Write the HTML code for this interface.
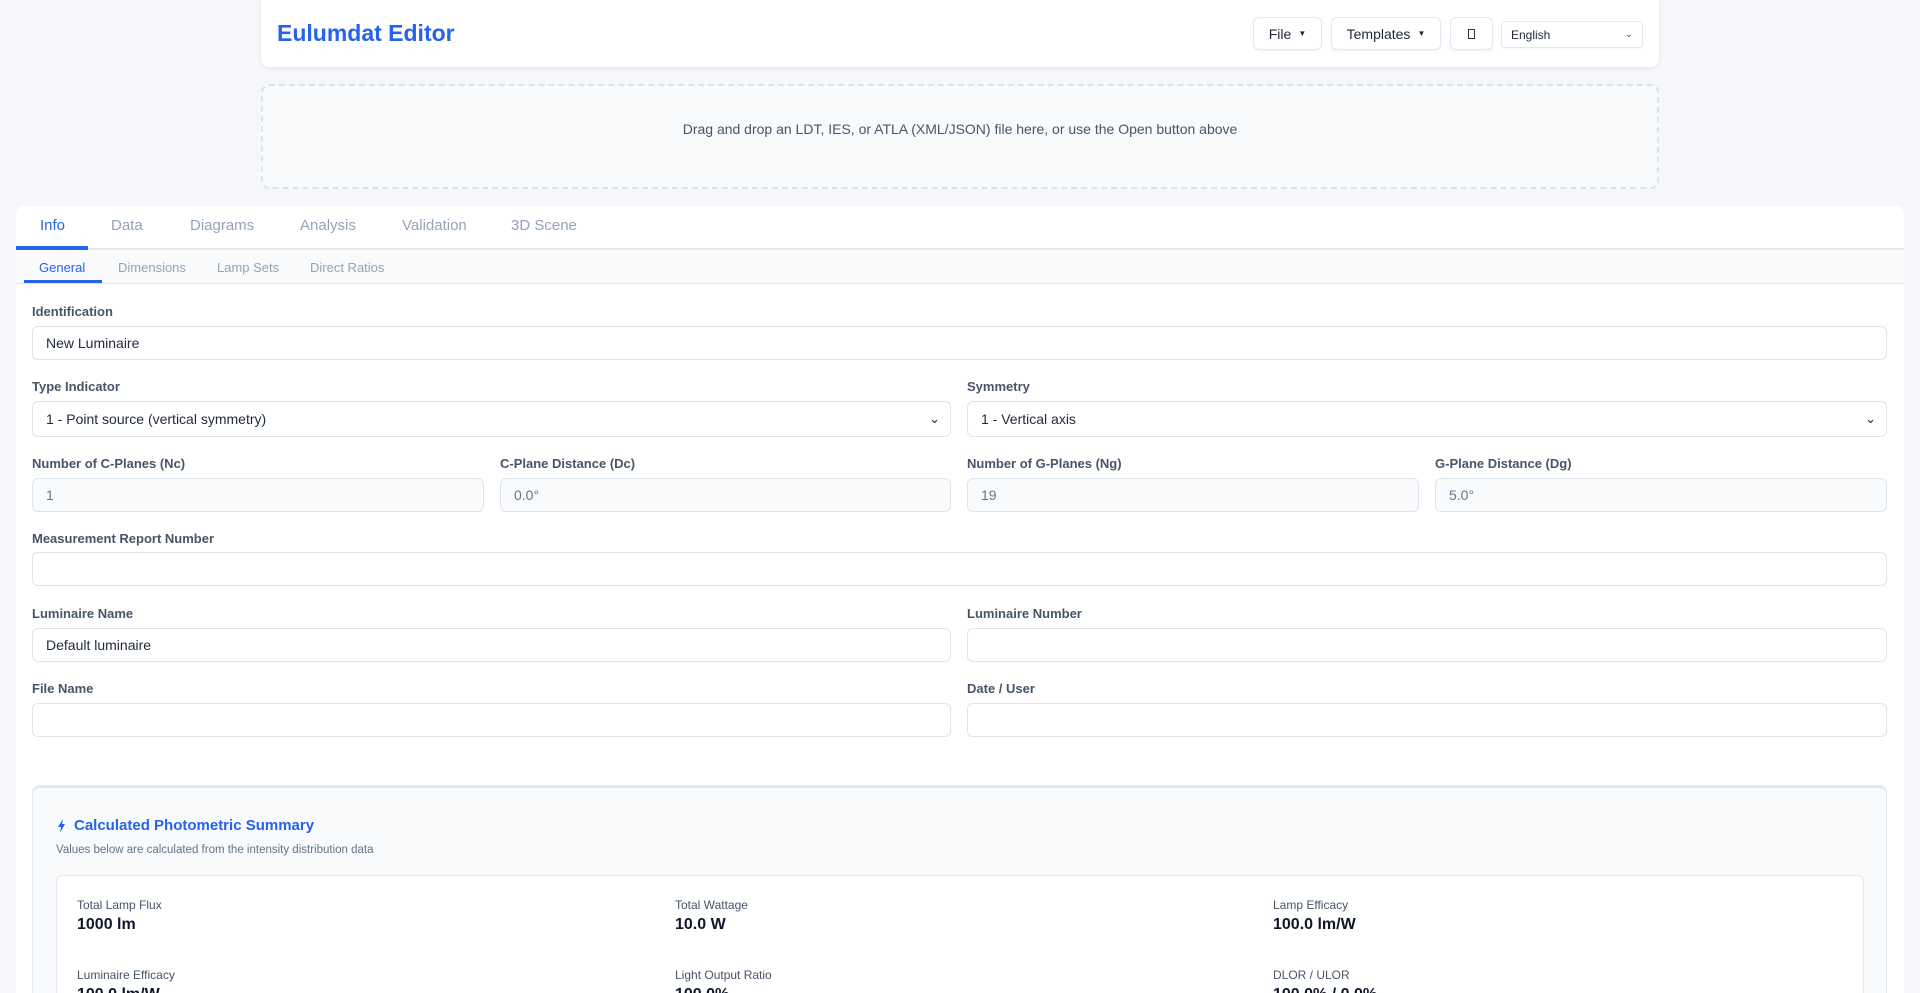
<!DOCTYPE html>
<html style="overflow:hidden;height:993px"><head><meta charset="utf-8"><style>
*{box-sizing:border-box;margin:0;padding:0}
body{width:1920px;height:993px;overflow:hidden;background:#f5f7fa;font-family:"Liberation Sans",sans-serif;position:relative;color:#1e293b}
.abs{position:absolute}
.hdr{left:261px;top:0;width:1398px;height:67px;background:#fff;border-radius:0 0 8px 8px;box-shadow:0 1px 4px rgba(0,0,0,.08)}
.title{left:16px;top:20px;font-size:23px;font-weight:bold;color:#2563eb}
.btn{top:17px;height:33px;border:1px solid #e2e8f0;border-radius:6px;background:#fff;font-size:14px;color:#1e293b;display:flex;align-items:center;justify-content:center;box-shadow:0 1px 2px rgba(0,0,0,.05)}
.drop{left:261px;top:84px;width:1398px;height:105px;border:2px dashed #dde3ea;border-radius:8px;background:#f8fafc;text-align:center;line-height:86px;font-size:14px;color:#475569}
.main{left:16px;top:206px;width:1888px;height:787px;background:#fff;border-radius:8px 8px 0 0;overflow:hidden}
.tabs{position:absolute;left:0;top:0;width:100%;height:44px;border-bottom:2px solid #e2e8f0}
.tab{position:absolute;top:11px;font-size:15px;color:#94a3b8}
.sub{position:absolute;left:0;top:44px;width:100%;height:34px;background:#f8fafc;border-bottom:1px solid #e2e8f0}
.st{position:absolute;top:10px;font-size:13px;color:#94a3b8}
.lbl{position:absolute;font-size:13px;font-weight:bold;color:#475569;margin-top:1px}
.inp{position:absolute;height:34px;border:1px solid #dfe5ec;border-radius:6px;background:#fff;font-size:14px;padding-left:13px;line-height:32px;color:#1e293b}
.dis{background:#f8fafc;color:#64748b}
.chev{position:absolute;right:10px;top:0;font-size:13px}
.sum{position:absolute;left:16px;top:579px;width:1855px;height:208px;overflow:hidden;background:#f8fafc;border:1px solid #e2e8f0;border-top:3px solid #e2e8f0;border-radius:8px 8px 0 0;border-bottom:none}
.card{position:absolute;left:23px;top:87px;width:1808px;height:200px;background:#fff;border:1px solid #e2e8f0;border-radius:6px}
.kl{position:absolute;font-size:12px;color:#475569}
.kv{position:absolute;font-size:16px;font-weight:bold;color:#0f172a}
</style></head><body>
<div class="abs hdr">
 <div class="abs title">Eulumdat Editor</div>
 <div class="abs btn" style="left:992px;width:69px">File <span style="font-size:8px;margin-left:7px">▼</span></div>
 <div class="abs btn" style="left:1070px;width:110px">Templates <span style="font-size:8px;margin-left:7px">▼</span></div>
 <div class="abs btn" style="left:1189px;width:43px"><span style="display:inline-block;width:7px;height:10px;border:1px solid #333"></span></div>
 <div class="abs btn" style="left:1240px;top:21px;height:27px;width:142px;justify-content:flex-start;padding-left:9px;font-size:12px;border-radius:4px">English<span style="position:absolute;right:9px;font-size:10px;color:#555">⌄</span></div>
</div>
<div class="abs drop">Drag and drop an LDT, IES, or ATLA (XML/JSON) file here, or use the Open button above</div>
<div class="abs main">
 <div class="tabs">
  <div class="tab" style="left:24px;color:#2563eb">Info</div>
  <div class="tab" style="left:95px">Data</div>
  <div class="tab" style="left:174px">Diagrams</div>
  <div class="tab" style="left:284px">Analysis</div>
  <div class="tab" style="left:386px">Validation</div>
  <div class="tab" style="left:495px">3D Scene</div>
  <div style="position:absolute;left:0;top:40px;width:72px;height:4px;background:#2563eb"></div>
 </div>
 <div class="sub">
  <div class="st" style="left:23px;color:#2563eb">General</div>
  <div class="st" style="left:102px">Dimensions</div>
  <div class="st" style="left:201px">Lamp Sets</div>
  <div class="st" style="left:294px">Direct Ratios</div>
  <div style="position:absolute;left:8px;top:30px;width:78px;height:3px;background:#2563eb"></div>
 </div>
 <div class="lbl" style="left:16px;top:97px">Identification</div>
 <div class="inp" style="left:16px;top:120px;width:1855px">New Luminaire</div>
 <div class="lbl" style="left:16px;top:172px">Type Indicator</div>
 <div class="inp" style="left:16px;top:195px;width:919px;height:36px;line-height:34px">1 - Point source (vertical symmetry)<span class="chev">⌄</span></div>
 <div class="lbl" style="left:951px;top:172px">Symmetry</div>
 <div class="inp" style="left:951px;top:195px;width:920px;height:36px;line-height:34px">1 - Vertical axis<span class="chev">⌄</span></div>
 <div class="lbl" style="left:16px;top:249px">Number of C-Planes (Nc)</div>
 <div class="inp dis" style="left:16px;top:272px;width:452px">1</div>
 <div class="lbl" style="left:484px;top:249px">C-Plane Distance (Dc)</div>
 <div class="inp dis" style="left:484px;top:272px;width:451px">0.0°</div>
 <div class="lbl" style="left:951px;top:249px">Number of G-Planes (Ng)</div>
 <div class="inp dis" style="left:951px;top:272px;width:452px">19</div>
 <div class="lbl" style="left:1419px;top:249px">G-Plane Distance (Dg)</div>
 <div class="inp dis" style="left:1419px;top:272px;width:452px">5.0°</div>
 <div class="lbl" style="left:16px;top:324px">Measurement Report Number</div>
 <div class="inp" style="left:16px;top:346px;width:1855px"></div>
 <div class="lbl" style="left:16px;top:399px">Luminaire Name</div>
 <div class="inp" style="left:16px;top:422px;width:919px">Default luminaire</div>
 <div class="lbl" style="left:951px;top:399px">Luminaire Number</div>
 <div class="inp" style="left:951px;top:422px;width:920px"></div>
 <div class="lbl" style="left:16px;top:474px">File Name</div>
 <div class="inp" style="left:16px;top:497px;width:919px"></div>
 <div class="lbl" style="left:951px;top:474px">Date / User</div>
 <div class="inp" style="left:951px;top:497px;width:920px"></div>
 <div class="sum">
  <svg style="position:absolute;left:24px;top:31px" width="9" height="14" viewBox="0 0 9 14"><path d="M6 0 L1 8 H4 L3 14 L8 5 H5 Z" fill="#2563eb"/></svg>
  <div style="position:absolute;left:41px;top:29px;font-size:15px;font-weight:bold;color:#2563eb">Calculated Photometric Summary</div>
  <div style="position:absolute;left:23px;top:56px;font-size:11.5px;color:#64748b">Values below are calculated from the intensity distribution data</div>
  <div class="card">
   <div class="kl" style="left:20px;top:22px">Total Lamp Flux</div><div class="kv" style="left:20px;top:40px">1000 lm</div>
   <div class="kl" style="left:618px;top:22px">Total Wattage</div><div class="kv" style="left:618px;top:40px">10.0 W</div>
   <div class="kl" style="left:1216px;top:22px">Lamp Efficacy</div><div class="kv" style="left:1216px;top:40px">100.0 lm/W</div>
   <div class="kl" style="left:20px;top:92px">Luminaire Efficacy</div><div class="kv" style="left:20px;top:110px">100.0 lm/W</div>
   <div class="kl" style="left:618px;top:92px">Light Output Ratio</div><div class="kv" style="left:618px;top:110px">100.0%</div>
   <div class="kl" style="left:1216px;top:92px">DLOR / ULOR</div><div class="kv" style="left:1216px;top:110px">100.0% / 0.0%</div>
  </div>
 </div>
</div>
</body></html>
